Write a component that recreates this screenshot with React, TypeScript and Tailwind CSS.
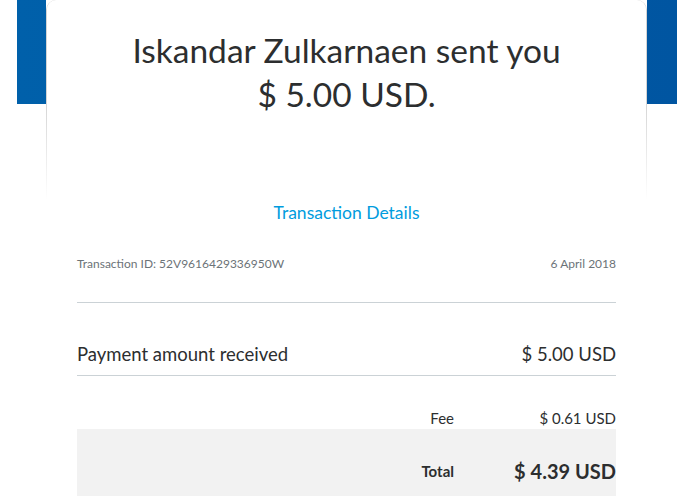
export default function App() {
  return (
    <div className="min-h-[496px] bg-white font-['Lato',sans-serif] text-[#2c2e2f]">
      <div className="ml-[17px] w-[660px] bg-[linear-gradient(to_right,#0060aa,#0055a1)] bg-[length:100%_104px] bg-no-repeat pl-[29px]">
        <div className="w-[601px] bg-white">
          {/* Header card */}
          <div className="rounded-t-[10px] bg-gradient-to-b from-[#d4d4d4] from-50% to-white px-px">
            <div className="flex h-[200px] flex-col items-center rounded-t-[9px] bg-white pt-[28px] text-center text-[33.5px] leading-[44px]">
              <p>Iskandar Zulkarnaen sent you</p>
              <p>$ 5.00 USD.</p>
            </div>
          </div>

          <div className="px-[31px]">
            <div className="text-center text-[17.5px] leading-[26px] text-[#009cde]">Transaction Details</div>

            <div className="mt-[29px] flex justify-between text-[12px] text-[#6c7378]">
              <span>Transaction ID: 52V9616429336950W</span>
              <span>6 April 2018</span>
            </div>
            <div className="mt-[29px] border-t border-[#cbd2d6]" />

            <div className="mt-[38px] flex items-end justify-between border-b border-[#cbd2d6] pb-[6px] text-[18.5px]">
              <span>Payment amount received</span>
              <span>$ 5.00 USD</span>
            </div>

            <div className="mt-[31px] flex justify-end text-[15px]">
              <span className="w-[120px] text-right">Fee</span>
              <span className="w-[162px] text-right">$ 0.61 USD</span>
            </div>

            <div className="flex h-[80px] items-center justify-end bg-[#f2f2f2] pb-[4px] pt-[8px]">
              <span className="w-[120px] text-right text-[15px] font-bold">Total</span>
              <span className="w-[162px] text-right text-[20px] font-bold">$ 4.39 USD</span>
            </div>
          </div>
        </div>
      </div>
    </div>
  );
}
